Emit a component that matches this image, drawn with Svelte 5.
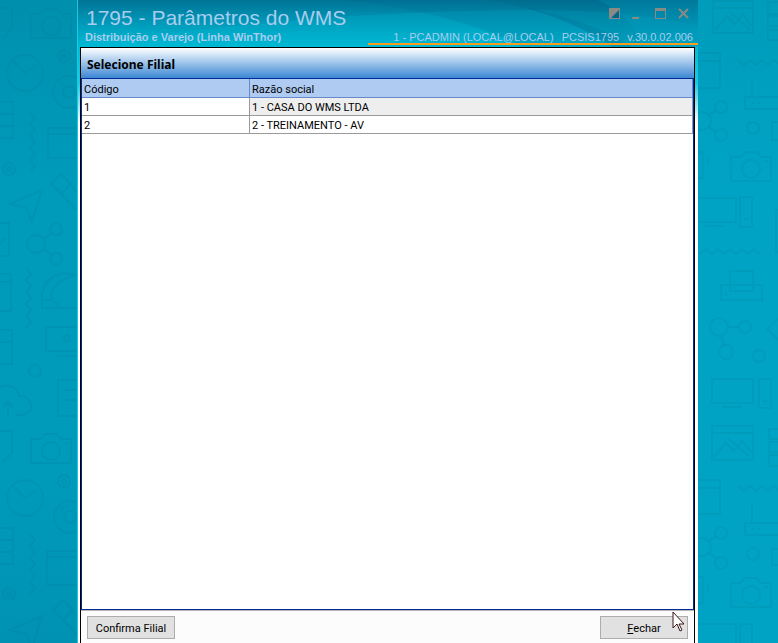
<script lang="ts">
    type Filial = { codigo: number; razao: string };

    let filiais: Filial[] = [
        {codigo: 1, razao: "1 - CASA DO WMS LTDA"},
        {codigo: 2, razao: "2 - TREINAMENTO - AV"},
    ];
    let selected = 1;
</script>

<div class="desktop">
    <div class="side left" aria-hidden="true">
        <svg class="doodles" width="77" height="643" viewBox="0 0 77 643">
            <defs>
                <symbol id="camera" width="44" height="34" overflow="visible">
                    <path d="M1 6h10l4-5h12l4 5h10v24H1zM35 10h3"/>
                    <circle cx="21" cy="18" r="9"/>
                </symbol>
                <g id="clock">
                    <circle r="18"/>
                    <path d="M-11-11L0 0l11-8"/>
                </g>
                <g id="disc">
                    <circle r="16"/>
                    <circle r="6"/>
                    <path d="M-9-7l3-3"/>
                </g>
                <path id="wave" d="M0 0l5 6-5 6 5 6-5 6 5 6-5 6 5 6-5 6 5 6-5 6"/>
                <path id="plane" d="M0 14L32 0 22 32 16 18z"/>
                <g id="pencil">
                    <path d="M0 10L10 0l10 10-10 10zM5 14l20 22M17 8l20 22"/>
                </g>
            </defs>
            <use href="#camera" x="30" y="8"/>
            <use href="#clock" x="25" y="73"/>
            <use href="#disc" x="69" y="92"/>
            <circle cx="64" cy="56" r="6"/>
            <circle cx="64" cy="56" r="2"/>
            <path d="M-2 8h14v20L4 38M-2 102h15v36H-2M-2 114h15M-2 126h15"/>
            <use href="#wave" x="30" y="112"/>
            <path d="M80 128H48v30h32M48 134h32"/>
            <circle cx="9" cy="169" r="6"/>
            <circle cx="9" cy="169" r="2"/>
            <use href="#plane" x="10" y="190"/>
            <use href="#pencil" x="51" y="174"/>
            <path d="M-2 223H9v33H-2M-2 246l7-8M-2 274h13v37H-2M-2 282h13"/>
            <circle cx="36" cy="244" r="9"/>
            <circle cx="56" cy="229" r="6"/>
            <circle cx="56" cy="259" r="6"/>
            <path d="M44 239l7-6M44 249l7 6"/>
            <use href="#wave" x="26" y="268"/>
            <path d="M80 308H42v-14c2-10 8-17 18-20 8-2 14 0 20 4M51 300c0-14 8-20 22-24M42 300h10l8 6"/>
            <path d="M80 327H46v24h34M55 356h25"/>
            <circle cx="67" cy="338" r="3"/>
            <path d="M-2 330h14v34H-2M-2 342h14"/>
            <circle cx="35" cy="371" r="6"/>
            <path d="M80 380H58v36h22M64 390h16M64 400h16"/>
            <path d="M-2 388c10-6 20 0 21 8 14-1 17 18 3 19h-6M8 418v-16M3 407l5-6 5 6"/>
            <path d="M-2 431h14v22L3 462"/>
            <use href="#camera" x="30" y="433"/>
            <circle cx="64" cy="481" r="6"/>
            <circle cx="64" cy="481" r="2"/>
            <use href="#clock" x="25" y="498"/>
            <use href="#disc" x="70" y="517"/>
            <path d="M-2 528h15v36H-2M-2 540h15M-2 552h15"/>
            <use href="#wave" x="30" y="534"/>
            <path d="M80 551H47v34h33M47 557h33"/>
            <circle cx="9" cy="594" r="6"/>
            <circle cx="9" cy="594" r="2"/>
            <use href="#plane" x="10" y="616"/>
            <use href="#pencil" x="53" y="600"/>
        </svg>
    </div>

    <main class="window">
        <header class="titlebar">
            <svg class="swoosh" viewBox="0 0 621 47" preserveAspectRatio="none" aria-hidden="true">
                <path d="M0 47C130 25 280 12 440 10c80-1 140 6 181 16v21z" fill="#00b4d2" opacity=".28"/>
                <path d="M270 0c70 8 130 24 175 47h110C520 24 470 8 400 0z" fill="#006a90" opacity=".2"/>
                <path d="M410 0c40 6 90 22 125 47h86V0z" fill="#00587a" opacity=".25"/>
                <path d="M520 0c20 8 38 24 46 47h55V0z" fill="#00b0d0" opacity=".2"/>
            </svg>
            <div class="titles">
                <h1>1795 - Parâmetros do WMS</h1>
                <p>Distribuição e Varejo (Linha WinThor)</p>
            </div>
            <div class="session">
                <div class="controls">
                    <button type="button" aria-label="Recolher">
                        <svg width="11" height="11" viewBox="0 0 11 11"><path d="M0 0h11v11H0z"/><path class="cut" d="M10 2v8H2z"/></svg>
                    </button>
                    <button type="button" aria-label="Minimizar">
                        <svg width="11" height="11" viewBox="0 0 11 11"><path d="M0 9h7v2H0z"/></svg>
                    </button>
                    <button type="button" aria-label="Maximizar">
                        <svg width="11" height="11" viewBox="0 0 11 11"><path fill-rule="evenodd" d="M0 0h11v11H0zM1 3v7h9V3z"/></svg>
                    </button>
                    <button type="button" aria-label="Fechar janela">
                        <svg width="11" height="11" viewBox="0 0 11 11"><path class="cross" d="M1 1l9 9M10 1l-9 9"/></svg>
                    </button>
                </div>
                <div class="info">
                    <span>1 - PCADMIN (LOCAL@LOCAL)</span>
                    <span>PCSIS1795</span>
                    <span>v.30.0.02.006</span>
                </div>
            </div>
        </header>

        <div class="frame">
            <section class="panel">
                <h2>Selecione Filial</h2>
                <div class="grid">
                    <table>
                        <thead>
                            <tr>
                                <th class="codigo">Código</th>
                                <th>Razão social</th>
                            </tr>
                        </thead>
                        <tbody>
                            {#each filiais as filial}
                                <tr class:selected={filial.codigo === selected} on:click={() => (selected = filial.codigo)}>
                                    <td>{filial.codigo}</td>
                                    <td>{filial.razao}</td>
                                </tr>
                            {/each}
                        </tbody>
                    </table>
                </div>
                <footer>
                    <button type="button">Confirma Filial</button>
                    <button type="button"><u>F</u>echar</button>
                    <svg class="cursor" width="13" height="21" viewBox="0 0 13 21" aria-hidden="true">
                        <path d="M1 1v16l4-4 3 7 2-1-3-6h5z"/>
                    </svg>
                </footer>
            </section>
        </div>
    </main>

    <div class="side right" aria-hidden="true">
        <svg class="doodles" width="80" height="643" viewBox="698 0 80 643">
            <path d="M713 1h40v32h-40zM713 8h40M715 30l12-14 8 8 8-10 8 12M730 12l20 18M782 2h-14v12h14M782 16h-14v10h14M782 30h-14v10h14"/>
            <path d="M694 53h26v35h-26M694 61h26"/>
            <path d="M738 60l6 5 6-5 6 5 6-5 6 5 6-5 6 5"/>
            <path d="M782 97h-37v12h37M752 78v19M752 103h2M758 103h2"/>
            <circle cx="702" cy="121" r="9"/>
            <circle cx="721" cy="107" r="6"/>
            <circle cx="721" cy="135" r="6"/>
            <path d="M709 115l7-5M709 127l7 5"/>
            <circle cx="753" cy="128" r="6"/>
            <path d="M782 122h-10v18h10M694 152h9v26h-9M708 158v8"/>
            <use href="#camera" x="730" y="151"/>
            <path d="M694 198h42v24h-42M705 226h20M740 197h12v30h-12zM744 219h4"/>
            <path d="M782 210h-6v42h6"/>
            <path d="M700 254l6-5 6 5 6-5 6 5 6-5 6 5 6-5 6 5 6-5 6 5"/>
            <path d="M730 285v-14h23v20h-23zM721 285h41v15h-41zM726 296v-4"/>
            <circle cx="719" cy="327" r="9"/>
            <circle cx="745" cy="327" r="6"/>
            <circle cx="726" cy="352" r="7"/>
            <path d="M728 327h11M721 336l3 9M780 317l-13 12 13 12"/>
            <circle cx="759" cy="356" r="6"/>
            <path d="M712 379h41v24h-41zM722 407h20M759 379h12v29h-12zM763 401h4"/>
            <path d="M712 426h41v34h-41zM712 433h41M714 457l12-14 8 8 8-10 10 12M728 438l22 19M782 429h-13v10h13M782 442h-13v10h13M782 455h-13v11h13"/>
            <path d="M694 480h26v34h-26M694 488h26"/>
            <path d="M738 486l6 5 6-5 6 5 6-5 6 5 6-5 6 5"/>
            <path d="M782 523h-37v12h37M752 504v19M752 529h2M758 529h2"/>
            <circle cx="702" cy="547" r="9"/>
            <circle cx="721" cy="533" r="6"/>
            <circle cx="721" cy="563" r="6"/>
            <path d="M709 541l7-5M709 553l7 5"/>
            <circle cx="753" cy="554" r="6"/>
            <path d="M782 549h-10v16h10M694 577h9v26h-9M708 585v8"/>
            <use href="#camera" x="730" y="577"/>
            <path d="M694 624h42v24h-42M740 624h12v30h-12z"/>
        </svg>
    </div>
</div>

<style>
    :global(body) {
        background: #009fbf;
    }

    .desktop {
        display: grid;
        grid-template-columns: 77px 1fr 80px;
        min-height: 100vh;
        font-family: Roboto, Tahoma, sans-serif;
        font-size: 11px;
        color: #000;
    }

    .side {
        position: relative;
        overflow: hidden;
    }

    .left {
        background: linear-gradient(#0090ae, #009abb 180px, #009abb 480px, #0092b3);
    }

    .right {
        background: linear-gradient(#009cbb, #00a3c4 180px);
    }

    .doodles {
        position: absolute;
        top: 0;
        left: 0;
        fill: none;
        stroke: #00708c;
        stroke-opacity: 0.14;
        stroke-width: 2;
    }

    .window {
        display: flex;
        flex-direction: column;
        min-width: 0;
        border-left: 1px solid #19cbe2;
    }

    .titlebar {
        position: relative;
        display: flex;
        justify-content: space-between;
        height: 47px;
        background: linear-gradient(#007395, #0095b5 20px, #00bcd6);
        font-family: "Liberation Sans", Arial, sans-serif;
        color: #a9cdee;
    }

    .swoosh {
        position: absolute;
        width: 100%;
        height: 100%;
    }

    .titles, .session {
        position: relative;
        white-space: nowrap;
    }

    .titles {
        padding: 6px 0 0 7px;
    }

    h1 {
        margin: 0 0 0 1px;
        font-size: 21px;
        font-weight: normal;
        line-height: 24px;
    }

    .titles p {
        margin: 0;
        font-weight: bold;
        line-height: 14px;
    }

    .controls {
        display: flex;
        justify-content: flex-end;
        gap: 12px;
        padding: 8px 9px 0 0;
    }

    .controls button {
        display: flex;
        padding: 0;
        border: none;
        background: none;
    }

    .controls svg {
        fill: #8a8a84;
    }

    .controls .cut {
        fill: #00688a;
    }

    .controls .cross {
        fill: none;
        stroke: #8a8a84;
        stroke-width: 2;
    }

    .info {
        display: flex;
        gap: 8px;
        padding: 12px 5px 0 25px;
        border-bottom: 2px solid #f99c1c;
        line-height: 12px;
    }

    .frame {
        display: flex;
        flex: 1;
        padding: 0 3px 0 2px;
        background: linear-gradient(#00bcd6, #19cbe2 36px, #fff 76px);
    }

    .panel {
        display: flex;
        flex: 1;
        flex-direction: column;
        border: 1px solid #000;
        border-bottom: none;
        background: #fcfcfc;
    }

    h2 {
        margin: 0;
        padding: 4px 6px 0;
        border-bottom: 1px solid #002c96;
        background: linear-gradient(#fff, #b6d3f0 11px, #3c87d4);
        font-family: "Noto Sans", Tahoma, sans-serif;
        font-size: 12px;
        line-height: 26px;
    }

    .grid {
        flex: 1;
        border: 1px solid #002c96;
        border-top: none;
        background: #fff;
    }

    table {
        width: 100%;
        table-layout: fixed;
        border-collapse: separate;
        border-spacing: 0;
    }

    th, td {
        padding: 2px 2px 0;
        border-right: 1px solid #9a9a9a;
        border-bottom: 1px solid #9a9a9a;
        line-height: 15px;
        text-align: left;
    }

    th {
        padding-top: 3px;
        border-color: #6689cc;
        background: #afcbf1;
        font-weight: normal;
    }

    .codigo {
        width: 163px;
    }

    .selected td + td {
        background: #eee;
    }

    footer {
        position: relative;
        display: flex;
        justify-content: space-between;
        padding: 5px 6px 4px;
        border-top: 1px solid #b4b4b4;
    }

    footer button {
        width: 88px;
        height: 23px;
        padding: 2px 0 0;
        border: 1px solid #adadad;
        background: #e1e1e1;
        color: #000;
        font: inherit;
    }

    .cursor {
        position: absolute;
        top: 0;
        right: 9px;
        fill: #fff;
        stroke: #3a1818;
    }
</style>
